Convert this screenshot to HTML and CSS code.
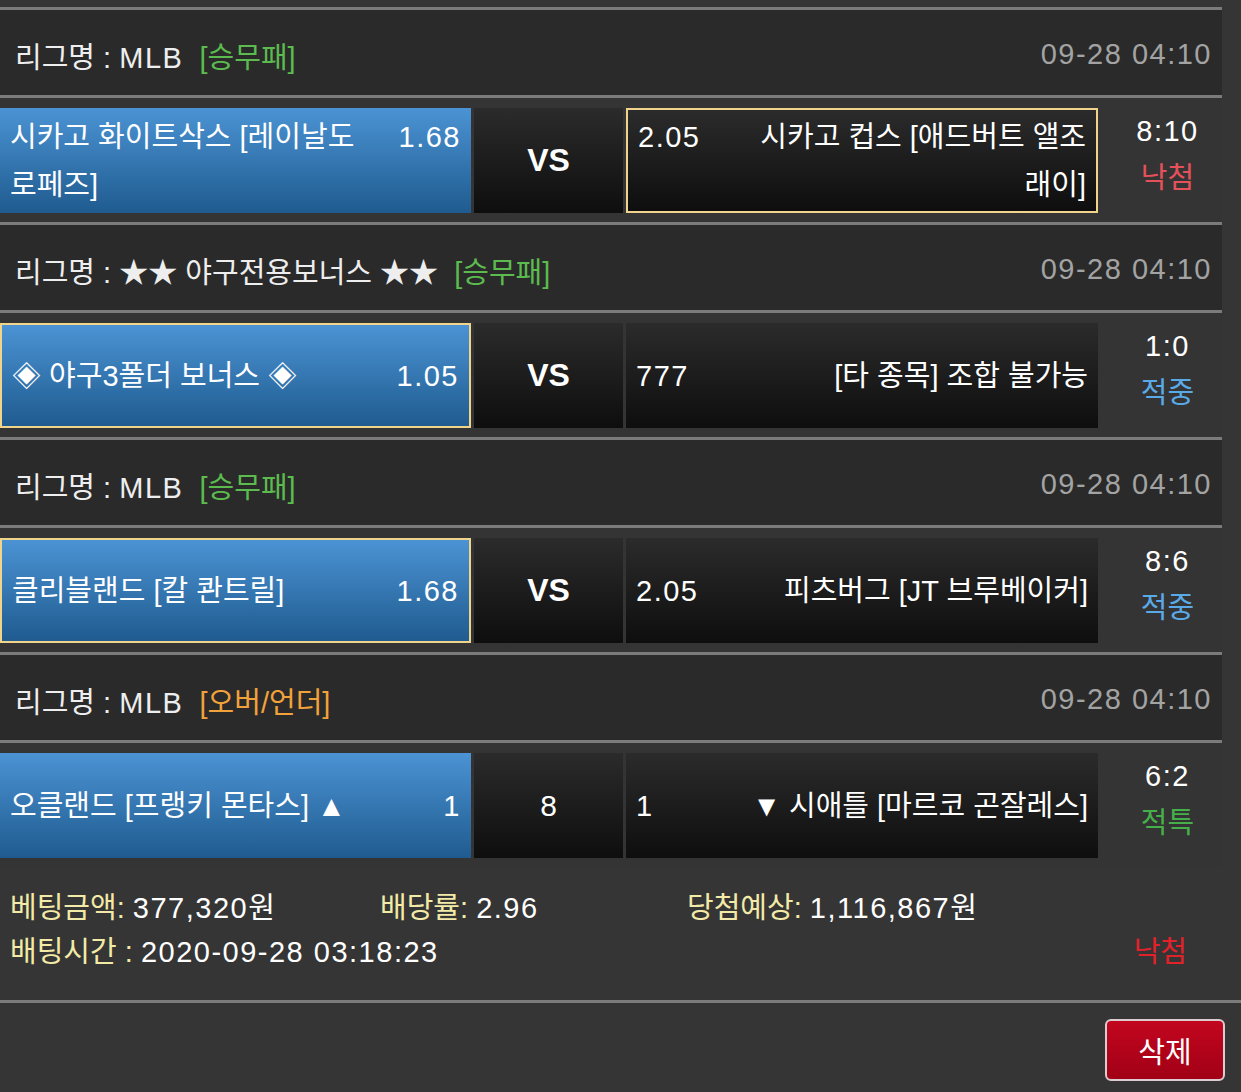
FILE: index.html
```html
<!DOCTYPE html>
<html lang="ko">
<head>
    <meta charset="UTF-8">
    <meta name="viewport" content="width=device-width, initial-scale=1.0">
    <title>베팅내역</title>
    <link rel="stylesheet" href="styles.css">
</head>
<body>
    <div class="slip">
        <div class="games">
            <div class="league">
                <div class="league-name">리그명 : <span class="num">MLB</span> &nbsp;<span class="tag wdl">[승무패]</span></div>
                <div class="league-time num">09-28 04:10</div>
            </div>
            <div class="match">
                <div class="team home">
                    <span class="team-name">시카고 화이트삭스 [레이날도 로페즈]</span>
                    <span class="odds num">1.68</span>
                </div>
                <div class="vs">VS</div>
                <div class="team away picked">
                    <span class="odds num">2.05</span>
                    <span class="team-name">시카고 컵스 [애드버트 앨조래이]</span>
                </div>
                <div class="score">
                    <div class="num">8:10</div>
                    <div class="lose">낙첨</div>
                </div>
            </div>

            <div class="league">
                <div class="league-name">리그명 : ★★ 야구전용보너스 ★★ &nbsp;<span class="tag wdl">[승무패]</span></div>
                <div class="league-time num">09-28 04:10</div>
            </div>
            <div class="match">
                <div class="team home picked">
                    <span class="team-name">◈ 야구3폴더 보너스 ◈</span>
                    <span class="odds num">1.05</span>
                </div>
                <div class="vs">VS</div>
                <div class="team away">
                    <span class="odds num">777</span>
                    <span class="team-name">[타 종목] 조합 불가능</span>
                </div>
                <div class="score">
                    <div class="num">1:0</div>
                    <div class="hit">적중</div>
                </div>
            </div>

            <div class="league">
                <div class="league-name">리그명 : <span class="num">MLB</span> &nbsp;<span class="tag wdl">[승무패]</span></div>
                <div class="league-time num">09-28 04:10</div>
            </div>
            <div class="match">
                <div class="team home picked">
                    <span class="team-name">클리블랜드 [칼 콴트릴]</span>
                    <span class="odds num">1.68</span>
                </div>
                <div class="vs">VS</div>
                <div class="team away">
                    <span class="odds num">2.05</span>
                    <span class="team-name">피츠버그 [JT 브루베이커]</span>
                </div>
                <div class="score">
                    <div class="num">8:6</div>
                    <div class="hit">적중</div>
                </div>
            </div>

            <div class="league">
                <div class="league-name">리그명 : <span class="num">MLB</span> &nbsp;<span class="tag ou">[오버/언더]</span></div>
                <div class="league-time num">09-28 04:10</div>
            </div>
            <div class="match">
                <div class="team home">
                    <span class="team-name">오클랜드 [프랭키 몬타스] ▲</span>
                    <span class="odds num">1</span>
                </div>
                <div class="vs line">8</div>
                <div class="team away">
                    <span class="odds num">1</span>
                    <span class="team-name">▼ 시애틀 [마르코 곤잘레스]</span>
                </div>
                <div class="score">
                    <div class="num">6:2</div>
                    <div class="special">적특</div>
                </div>
            </div>
        </div>

        <div class="summary">
            <div class="summary-row">
                <span class="sum-item amount"><span class="label">베팅금액:</span> <span class="num">377,320</span>원</span>
                <span class="sum-item rate"><span class="label">배당률:</span> <span class="num">2.96</span></span>
                <span class="sum-item"><span class="label">당첨예상:</span> <span class="num">1,116,867</span>원</span>
            </div>
            <div class="summary-row">
                <span class="sum-item"><span class="label">배팅시간 :</span> <span class="num">2020-09-28 03:18:23</span></span>
                <span class="final">낙첨</span>
            </div>
        </div>

        <div class="actions">
            <button class="btn-delete">삭제</button>
        </div>
    </div>
</body>
</html>
```

FILE: styles.css
```css
body {
    margin: 0;
    padding-top: 7px;
    background: #353535;
    color: #fff;
    font-family: 'Liberation Sans', 'Noto Sans CJK KR', sans-serif;
    font-size: 29px;
}
.num {
    letter-spacing: 1.5px;
}
.games {
    width: 1222px;
}
.league {
    display: flex;
    justify-content: space-between;
    align-items: center;
    height: 88px;
    padding: 4px 10px 0 15px;
    box-sizing: border-box;
    background: #2a2a2a;
    border-top: 3px solid #7b7b7b;
    color: #eee;
}
.league-time {
    color: #a3a3a3;
}
.tag.wdl {
    color: #5cbb4f;
}
.tag.ou {
    color: #f2a23a;
}
.match {
    display: flex;
    gap: 3px;
    padding: 10px 0 9px;
    border-top: 3px solid #7b7b7b;
    background: #343434;
}
.team {
    box-sizing: border-box;
    display: flex;
    flex-wrap: wrap;
    align-items: baseline;
    align-content: center;
    gap: 22px;
    height: 105px;
    padding: 0 10px;
    line-height: 48px;
}
.team.home {
    width: 471px;
    background: linear-gradient(#4b93d4, #1f5b8f);
}
.team.away {
    width: 472px;
    gap: 46px;
    background: linear-gradient(#2b2b2b, #0e0e0e);
}
.team.picked {
    border: 2px solid #f1d48b;
}
.team-name {
    flex: 1 1 0;
}
.away .team-name {
    text-align: right;
}
.odds {
    flex: none;
}
.vs {
    display: flex;
    align-items: center;
    justify-content: center;
    width: 149px;
    height: 105px;
    background: linear-gradient(#2b2b2b, #0e0e0e);
    font-size: 32px;
    font-weight: bold;
}
.vs.line {
    font-size: 30px;
    font-weight: normal;
}
.score {
    flex: 1;
    padding-left: 12px;
    text-align: center;
    line-height: 47px;
}
.lose {
    color: #e5515a;
}
.hit {
    color: #5aaae8;
}
.special {
    color: #45b04a;
}
.summary {
    padding: 19px 54px 26px 10px;
    line-height: 44px;
}
.summary-row {
    display: flex;
    justify-content: space-between;
}
.summary-row:first-child {
    justify-content: flex-start;
}
.sum-item.amount {
    width: 370px;
}
.sum-item.rate {
    width: 307px;
}
.label {
    color: #f3eaa8;
}
.final {
    color: #e3212b;
}
.actions {
    display: flex;
    justify-content: flex-end;
    padding: 16px 16px 0;
    border-top: 3px solid #7b7b7b;
}
.btn-delete {
    width: 120px;
    height: 62px;
    border: 2px solid #dccbcf;
    border-radius: 6px;
    background: linear-gradient(#c2061f, #a10016);
    color: #fff;
    font-family: inherit;
    font-size: 29px;
    cursor: pointer;
}
```
